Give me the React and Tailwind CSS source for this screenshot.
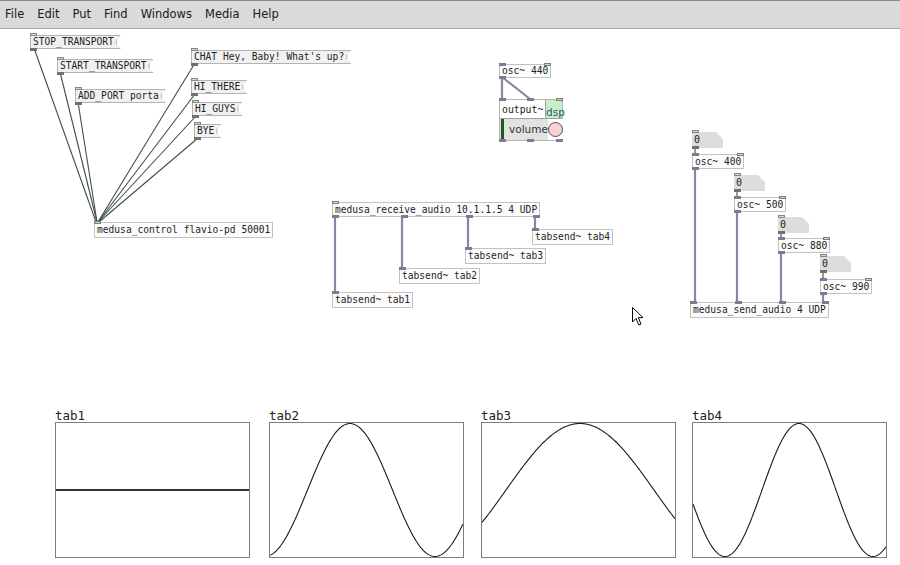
import React from "react";

// canvas starts under the 29px menu bar, node coords below are page coords
const OFF = 29;

const menu = ["File", "Edit", "Put", "Find", "Windows", "Media", "Help"];

const messages = [
  { x: 30, y: 35, text: "STOP_TRANSPORT" },
  { x: 57, y: 59, text: "START_TRANSPORT" },
  { x: 75, y: 89, text: "ADD_PORT porta" },
  { x: 191, y: 50, text: "CHAT Hey, Baby! What's up?" },
  { x: 191, y: 80, text: "HI_THERE" },
  { x: 192, y: 102, text: "HI_GUYS" },
  { x: 194, y: 124, text: "BYE" },
];

const objects = [
  { x: 94, y: 222, h: 16, text: "medusa_control flavio-pd 50001", ins: [["l", "ctl"]], outs: [] },
  { x: 499, y: 64, h: 14, text: "osc~ 440", ins: [["l", "sig"], ["r", "ctl"]], outs: [["l", "sig"]] },
  {
    x: 332, y: 202, h: 15, text: "medusa_receive_audio 10.1.1.5 4 UDP",
    ins: [["l", "ctl"]], outs: [["l", "sig"], [68, "sig"], [133, "sig"], ["r", "sig"]],
  },
  { x: 532, y: 229, h: 16, text: "tabsend~ tab4", ins: [["l", "sig"]], outs: [] },
  { x: 465, y: 248, h: 16, text: "tabsend~ tab3", ins: [["l", "sig"]], outs: [] },
  { x: 399, y: 268, h: 16, text: "tabsend~ tab2", ins: [["l", "sig"]], outs: [] },
  { x: 332, y: 292, h: 16, text: "tabsend~ tab1", ins: [["l", "sig"]], outs: [] },
  { x: 692, y: 154, h: 15, text: "osc~ 400", ins: [["l", "sig"], ["r", "ctl"]], outs: [["l", "sig"]] },
  { x: 734, y: 197, h: 15, text: "osc~ 500", ins: [["l", "sig"], ["r", "ctl"]], outs: [["l", "sig"]] },
  { x: 778, y: 238, h: 15, text: "osc~ 880", ins: [["l", "sig"], ["r", "ctl"]], outs: [["l", "sig"]] },
  { x: 820, y: 279, h: 15, text: "osc~ 990", ins: [["l", "sig"], ["r", "ctl"]], outs: [["l", "sig"]] },
  {
    x: 690, y: 302, h: 16, text: "medusa_send_audio 4 UDP",
    ins: [["l", "sig"], [44, "sig"], [88, "sig"], ["r", "sig"]], outs: [],
  },
];

const numbers = [
  { x: 692, y: 132 },
  { x: 734, y: 175 },
  { x: 778, y: 217 },
  { x: 820, y: 256 },
];

const ctlWires = [
  [34, 48, 96, 222],
  [60, 72, 97, 222],
  [78, 102, 97, 222],
  [195, 63, 98, 222],
  [195, 94, 98, 222],
  [196, 116, 98, 222],
  [198, 138, 99, 222],
  [695, 148, 695, 154],
  [737, 191, 737, 197],
  [781, 233, 781, 238],
  [823, 272, 823, 279],
];

const sigWires = [
  [502, 77, 502, 99],
  [502, 77, 530, 99],
  [695, 168, 695, 302],
  [737, 211, 737, 302],
  [781, 252, 781, 302],
  [823, 293, 823, 302],
  [335, 216, 335, 292],
  [402, 216, 402, 268],
  [468, 216, 468, 248],
  [535, 216, 535, 229],
];

const graphs = [
  { x: 55, label: "tab1", peak: null },
  { x: 269, label: "tab2", peak: 350, period: 170 },
  { x: 481, label: "tab3", peak: 580, period: 296 },
  { x: 692, label: "tab4", peak: 799, period: 148 },
];

function Iolet({ at, kind, top }) {
  const pos = at === "l" ? "left-[-1px]" : at === "r" ? "right-[-1px]" : "";
  const vert = top ? "top-[-2px]" : "bottom-[-2px]";
  const look =
    kind === "sig"
      ? "bg-[#7b7b95]"
      : "bg-[#cfd8cf] border border-[#72826f]";
  return (
    <span
      className={`absolute h-[3px] w-[7px] ${pos} ${vert} ${look}`}
      style={typeof at === "number" ? { left: at } : undefined}
    />
  );
}

function Obj({ x, y, h, text, ins, outs }) {
  return (
    <div
      className="absolute flex items-center whitespace-pre border border-[#c2c2c2] bg-[#fcfcfc] px-[2px] font-['DejaVu_Sans_Mono',monospace] text-[9.6px] leading-none text-[#1e1e1e]"
      style={{ left: x, top: y - OFF, height: h }}
    >
      {text}
      {ins.map(([at, kind], i) => (
        <Iolet key={"i" + i} at={at} kind={kind} top />
      ))}
      {outs.map(([at, kind], i) => (
        <Iolet key={"o" + i} at={at} kind={kind} />
      ))}
    </div>
  );
}

function Msg({ x, y, text }) {
  return (
    <div className="absolute h-[14px]" style={{ left: x, top: y - OFF }}>
      <div className="absolute inset-0 bg-[#b3b3b3] [clip-path:polygon(0_0,100%_0,calc(100%_-_4px)_4px,calc(100%_-_4px)_calc(100%_-_4px),100%_100%,0_100%)]" />
      <div className="absolute inset-[1px] bg-[#f1f1f1] [clip-path:polygon(0_0,100%_0,calc(100%_-_4px)_4px,calc(100%_-_4px)_calc(100%_-_4px),100%_100%,0_100%)]" />
      <span className="relative flex h-full items-center whitespace-pre pl-[3px] pr-[7px] font-['DejaVu_Sans_Mono',monospace] text-[9.6px] leading-none text-[#1e1e1e]">
        {text}
      </span>
      <span className="absolute left-0 top-[-2px] h-[3px] w-[7px] border border-[#7d8a7d] bg-[#d3dad3]" />
      <span className="absolute bottom-[-2px] left-0 h-[3px] w-[7px] bg-[#677767]" />
    </div>
  );
}

function Num({ x, y }) {
  return (
    <div className="absolute h-[16px] w-[31px]" style={{ left: x, top: y - OFF }}>
      <div className="absolute inset-0 bg-[#dddddd] [clip-path:polygon(0_0,calc(100%_-_7px)_0,100%_7px,100%_100%,0_100%)]" />
      <span className="relative flex h-full items-center pl-[2px] font-['DejaVu_Sans_Mono',monospace] text-[10px] leading-none text-[#222]">
        0
      </span>
      <span className="absolute left-0 top-[-2px] h-[3px] w-[7px] border border-[#7d8a7d] bg-[#d3dad3]" />
      <span className="absolute bottom-[-1px] left-0 h-[3px] w-[7px] bg-[#677767]" />
    </div>
  );
}

function Output() {
  return (
    <div
      className="absolute flex h-[42px] w-[64px] flex-col border border-[#b5b5b5] bg-white"
      style={{ left: 499, top: 99 - OFF }}
    >
      <div className="flex h-[18px]">
        <div className="flex-1 pl-[2px] pt-[5px] font-['DejaVu_Sans_Mono',monospace] text-[9.8px] leading-none text-[#1e1e1e]">
          output~
        </div>
        <div className="flex w-[17px] items-end border-l border-[#a0a0a0] bg-[#c8eec8] pb-[1px] font-['DejaVu_Sans',sans-serif] text-[10.5px] leading-none text-[#2b5877]">
          dsp
        </div>
      </div>
      <div className="relative flex flex-1 border-t border-[#a0a0a0]">
        <div className="flex flex-1 items-center bg-[#e2e2e2]">
          <div className="ml-[1px] h-full w-[3px] shrink-0 bg-[#1f5a1f]" />
          <span className="ml-[5px] whitespace-nowrap font-['DejaVu_Sans',sans-serif] text-[10.5px] leading-none text-[#333]">
            volume
          </span>
        </div>
        <div className="relative flex w-[17px] items-center justify-center bg-white">
          <div className="h-[15px] w-[15px] rounded-full border border-[#505050] bg-[#fcd0d0]" />
        </div>
      </div>
      <Iolet at="l" kind="sig" top />
      <Iolet at={27} kind="sig" top />
      <Iolet at="r" kind="ctl" top />
      <Iolet at="l" kind="sig" />
      <Iolet at={27} kind="sig" />
      <Iolet at="r" kind="sig" />
    </div>
  );
}

function Graph({ x, label, peak, period }) {
  const w = 193;
  const h = 134;
  let pts = "";
  if (peak !== null) {
    for (let i = 0; i <= w; i++) {
      const xp = x + 1 + i;
      const y = 67 - 66.5 * Math.cos((2 * Math.PI * (xp - peak)) / period);
      pts += `${i},${y.toFixed(2)} `;
    }
  }
  return (
    <div className="absolute flex flex-col" style={{ left: x, top: 409 - OFF }}>
      <div className="h-[13px] font-['DejaVu_Sans_Mono',monospace] text-[12.5px] leading-[13px] text-[#1e1e1e]">
        {label}
      </div>
      <div className="h-[136px] w-[195px] border border-[#7c7c7c] bg-white">
        <svg width={w} height={h} className="block">
          {peak === null ? (
            <line x1="0" y1="67" x2={w} y2="67" stroke="#333" strokeWidth="1.8" />
          ) : (
            <polyline points={pts} fill="none" stroke="#1a1a1a" strokeWidth="1.1" />
          )}
        </svg>
      </div>
    </div>
  );
}

export default function App() {
  return (
    <div className="flex h-[565px] w-[900px] flex-col overflow-hidden bg-white">
      {/* menu bar */}
      <div className="flex h-[29px] shrink-0 items-center gap-[13px] border-y border-t-[#8a8a8a] border-b-[#a8a8a8] bg-[#dadada] pl-[5px] font-['DejaVu_Sans',sans-serif] text-[11.5px] text-[#1a1a1a]">
        {menu.map((m) => (
          <span key={m}>{m}</span>
        ))}
      </div>

      {/* patch canvas */}
      <div className="relative flex-1 bg-white">
        <svg className="absolute inset-0" width="900" height="536" viewBox="0 29 900 536">
          {ctlWires.map(([a, b, c, d], i) => (
            <line key={i} x1={a} y1={b} x2={c} y2={d} stroke="#3f5043" strokeWidth="1.1" />
          ))}
          {sigWires.map(([a, b, c, d], i) => (
            <line key={i} x1={a} y1={b} x2={c} y2={d} stroke="#8787a2" strokeWidth="2.2" />
          ))}
        </svg>

        {messages.map((m) => (
          <Msg key={m.text} {...m} />
        ))}
        {objects.map((o) => (
          <Obj key={o.text} {...o} />
        ))}
        {numbers.map((n) => (
          <Num key={n.x} {...n} />
        ))}
        <Output />

        {graphs.map((g) => (
          <Graph key={g.label} {...g} />
        ))}

        {/* mouse pointer */}
        <svg className="absolute" style={{ left: 631, top: 306 - OFF }} width="14" height="21" viewBox="0 0 14 21">
          <path d="M1.5 1.5 L1.5 16 L5 12.5 L7.8 19 L10 18 L7.3 11.6 L12 11.6 Z" fill="#fff" stroke="#000" strokeWidth="1" strokeLinejoin="miter" />
        </svg>
      </div>
    </div>
  );
}
